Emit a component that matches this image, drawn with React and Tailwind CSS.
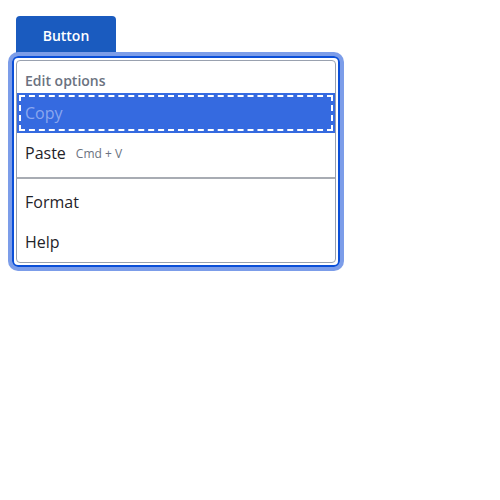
export default function App() {
  return (
    <div className="min-h-[500px] bg-white p-4" style={{ fontFamily: '"Open Sans", sans-serif' }}>
      <button className="flex h-10 w-[100px] items-center justify-center rounded-t-sm bg-[#1a5bbf] text-sm font-semibold text-white">
        Button
      </button>
      <div className="-ml-1 w-[328px] rounded-md border-2 border-[#0b4fd8] p-0.5 ring-4 ring-[#7c9de9]">
        <div className="rounded-sm border border-gray-400 bg-white">
          <div className="flex h-8 items-end pb-[2px] pl-2 text-sm font-semibold text-[#6b7280]">Edit options</div>
          <div className="flex h-10 items-center bg-[#356ae0] pl-2 text-base text-[#8ba7ee] outline-2 outline-dashed outline-white outline-offset-[-4px]">
            Copy
          </div>
          <div className="flex h-10 items-center gap-2.5 pl-2 text-base text-[#1f2329]">
            <span>Paste</span>
            <span className="pt-0.5 text-xs font-medium text-[#6b7280]">Cmd + V</span>
          </div>
          <div className="pb-[3px] pt-1">
            <div className="h-0.5 bg-[#a8acb3]" />
          </div>
          <div className="flex h-10 items-center pl-2 text-base text-[#1f2329]">Format</div>
          <div className="flex h-10 items-center pl-2 text-base text-[#1f2329]">Help</div>
        </div>
      </div>
    </div>
  );
}
